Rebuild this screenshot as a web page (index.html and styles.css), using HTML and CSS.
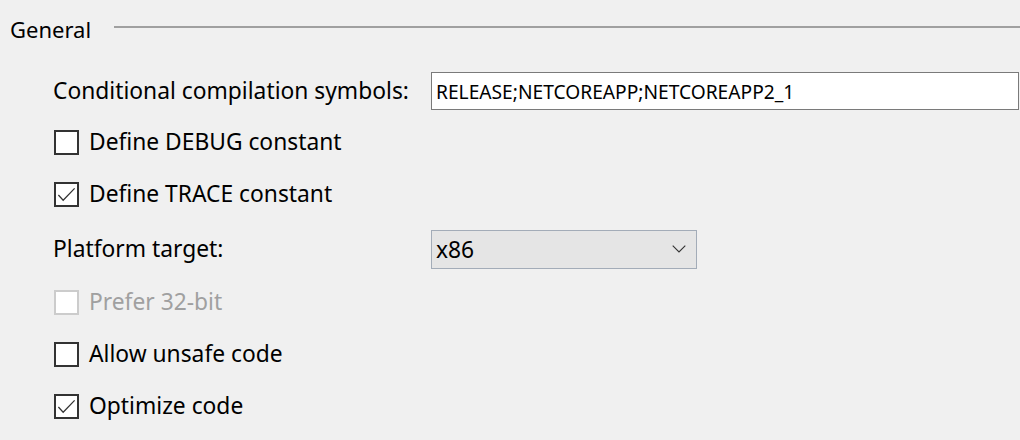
FILE: index.html
```html
<!DOCTYPE html>
<html>
<head>
<meta charset="utf-8">
<link rel="stylesheet" href="styles.css">
</head>
<body>
<div class="panel">
  <div class="section-header">
    <span class="section-title">General</span>
    <span class="section-rule"></span>
  </div>
  <div class="rows">
    <div class="row row-text">
      <span class="label label-wide">Conditional compilation symbols:</span>
      <div class="textbox">RELEASE;NETCOREAPP;NETCOREAPP2_1</div>
    </div>
    <div class="row row-a">
      <span class="checkbox"></span>
      <span class="label">Define DEBUG constant</span>
    </div>
    <div class="row row-a">
      <span class="checkbox checked"><svg viewBox="0 0 22 22" width="22" height="22"><polyline points="2.5,11 7.5,16.5 19.5,4" fill="none" stroke="#333" stroke-width="1.3"/></svg></span>
      <span class="label">Define TRACE constant</span>
    </div>
    <div class="row row-select">
      <span class="label label-wide">Platform target:</span>
      <div class="select">
        <span class="select-value">x86</span>
        <svg class="chevron" viewBox="0 0 14 8" width="14" height="8"><polyline points="0.7,0.7 7,7 13.3,0.7" fill="none" stroke="#333" stroke-width="1.1"/></svg>
      </div>
    </div>
    <div class="row row-b disabled">
      <span class="checkbox"></span>
      <span class="label">Prefer 32-bit</span>
    </div>
    <div class="row row-c">
      <span class="checkbox"></span>
      <span class="label">Allow unsafe code</span>
    </div>
    <div class="row row-b">
      <span class="checkbox checked"><svg viewBox="0 0 22 22" width="22" height="22"><polyline points="2.5,11 7.5,16.5 19.5,4" fill="none" stroke="#333" stroke-width="1.3"/></svg></span>
      <span class="label">Optimize code</span>
    </div>
  </div>
</div>
</body>
</html>
```
FILE: styles.css
```css
html, body {
  margin: 0;
  padding: 0;
  background: #f0f0f0;
}
body {
  font-family: "Noto Sans", "Open Sans", sans-serif;
  font-size: 22.8px;
  color: #000;
  width: 1020px;
  height: 440px;
  overflow: hidden;
}
.panel {
  display: flex;
  flex-direction: column;
}
.section-header {
  height: 58px;
  display: flex;
  align-items: center;
  padding-left: 10px;
}
.section-title {
  font-size: 22px;
  line-height: 1;
  margin-top: 0;
}
.section-rule {
  flex: 1;
  height: 2px;
  background: #a0a0a0;
  margin-left: 23px;
  margin-top: -5px;
}
.rows {
  display: flex;
  flex-direction: column;
  padding-left: 53px;
  margin-top: 8px;
}
.row {
  display: flex;
  align-items: center;
}
.row-text { height: 50px; }
.row-a { height: 52px; }
.row-select { height: 58px; }
.row-b { height: 48px; }
.row-c { height: 56px; }
.label {
  line-height: 1;
  white-space: nowrap;
}
.label-wide {
  width: 378px;
  flex: none;
}
.textbox {
  width: 588px;
  height: 38px;
  border: 1px solid #7a7a7a;
  background: #fff;
  display: flex;
  align-items: center;
  padding-left: 4px;
  box-sizing: border-box;
  font-size: 19.2px;
}
.checkbox {
  width: 25px;
  height: 25px;
  box-sizing: border-box;
  border: 2px solid #333;
  background: #fff;
  flex: none;
  margin-left: 1px;
  margin-right: 10px;
  display: flex;
}
.checkbox svg {
  display: block;
}
.disabled .checkbox {
  border-color: #ccc;
}
.disabled .label {
  color: #a0a0a0;
}
.select {
  width: 266px;
  height: 39px;
  box-sizing: border-box;
  border: 1px solid #a3acb8;
  background: #e5e5e5;
  display: flex;
  align-items: center;
  justify-content: space-between;
  padding: 0 10px 0 4px;
}
.chevron {
  display: block;
}
```
